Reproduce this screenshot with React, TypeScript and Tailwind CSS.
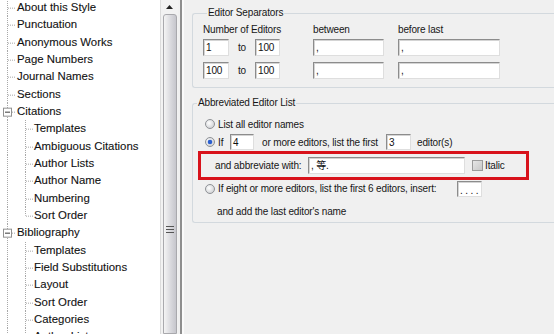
import React from "react";

type Item = { t: string; l: 0 | 1; exp?: boolean; last?: boolean };

const items: Item[] = [
  { t: "About this Style", l: 0 },
  { t: "Punctuation", l: 0 },
  { t: "Anonymous Works", l: 0 },
  { t: "Page Numbers", l: 0 },
  { t: "Journal Names", l: 0 },
  { t: "Sections", l: 0 },
  { t: "Citations", l: 0, exp: true },
  { t: "Templates", l: 1 },
  { t: "Ambiguous Citations", l: 1 },
  { t: "Author Lists", l: 1 },
  { t: "Author Name", l: 1 },
  { t: "Numbering", l: 1 },
  { t: "Sort Order", l: 1, last: true },
  { t: "Bibliography", l: 0, exp: true },
  { t: "Templates", l: 1 },
  { t: "Field Substitutions", l: 1 },
  { t: "Layout", l: 1 },
  { t: "Sort Order", l: 1 },
  { t: "Categories", l: 1 },
  { t: "Author Lists", l: 1 },
];

const H = 17.33;
const M = H / 2;

function TreeRow({ it }: { it: Item }) {
  const w = it.l === 0 ? 17 : 34;
  return (
    <div className="flex items-center h-[17.33px] whitespace-nowrap">
      <svg width={w} height={H} className="shrink-0">
        <line x1="7.5" y1="0" x2="7.5" y2={H} stroke="#a8a8a8" strokeDasharray="1 1" />
        {it.l === 0 && !it.exp && (
          <line x1="8" y1={M + 0.5} x2="16" y2={M + 0.5} stroke="#a8a8a8" strokeDasharray="1 1" />
        )}
        {it.l === 0 && it.exp && (
          <g>
            <rect x="3.5" y={M - 3.5} width="8" height="8" fill="#fff" stroke="#919191" />
            <line x1="5" y1={M + 0.5} x2="10" y2={M + 0.5} stroke="#3a3a3a" />
            <line x1="12" y1={M + 0.5} x2="16" y2={M + 0.5} stroke="#a8a8a8" strokeDasharray="1 1" />
          </g>
        )}
        {it.l === 1 && (
          <g>
            <line x1="25.5" y1="0" x2="25.5" y2={it.last ? M : H} stroke="#a8a8a8" strokeDasharray="1 1" />
            <line x1="26" y1={M + 0.5} x2="33" y2={M + 0.5} stroke="#a8a8a8" strokeDasharray="1 1" />
          </g>
        )}
      </svg>
      <span className="text-[11.4px] leading-none text-[#111] [-webkit-text-stroke:0.1px_#111]">{it.t}</span>
    </div>
  );
}

function Input({ w, v, h = 17, className = "" }: { w: number; v: string; h?: number; className?: string }) {
  return (
    <div
      className={
        "bg-white border border-[#8c8c8c] border-r-[#dedede] border-b-[#dedede] shadow-[inset_1px_1px_0_#d4d4d4] flex items-center pl-[2px] text-[10px] text-[#111] shrink-0 " +
        className
      }
      style={{ width: w, height: h }}
    >
      {v}
    </div>
  );
}

function Radio({ checked }: { checked?: boolean }) {
  return (
    <svg width="10" height="10" className="shrink-0">
      <defs>
        <radialGradient id="rg" cx="0.4" cy="0.4" r="0.7">
          <stop offset="0" stopColor="#ffffff" />
          <stop offset="1" stopColor="#c9cbce" />
        </radialGradient>
      </defs>
      <circle cx="5" cy="5" r="4.5" fill="url(#rg)" stroke="#8f9296" />
      {checked && <circle cx="5" cy="5" r="2.3" fill="#2b5fcf" />}
    </svg>
  );
}

export default function App() {
  return (
    <div
      className="w-[554px] h-[334px] flex overflow-hidden bg-[#f0f0f0]"
      style={{ fontFamily: '"Liberation Sans", Arial, "Noto Sans CJK SC", sans-serif' }}
    >
      {/* Tree */}
      <div className="w-[161px] h-full bg-white border-r border-[#dcdcdc] overflow-hidden">
        <div className="-mt-[1px]">
          {items.map((it, i) => (
            <TreeRow key={i} it={it} />
          ))}
        </div>
      </div>

      {/* Scrollbar */}
      <div className="w-[17px] h-full bg-[#f2f2f2] flex flex-col items-center">
        <div className="h-[14px] flex items-center justify-center">
          <svg width="7" height="4">
            <path d="M0 4 L3.5 0 L7 4 Z" fill="#222" />
          </svg>
        </div>
        <div className="flex-1 w-[14px] rounded-t-[3px] border border-[#a9a9ad] bg-gradient-to-r from-[#f4f4f4] via-[#dcdce0] to-[#c6c6cc] flex justify-center pt-[210px]">
          <svg width="8" height="9" className="shrink-0">
            <line x1="0" y1="1.5" x2="8" y2="1.5" stroke="#555" />
            <line x1="0" y1="4.5" x2="8" y2="4.5" stroke="#555" />
            <line x1="0" y1="7.5" x2="8" y2="7.5" stroke="#555" />
          </svg>
        </div>
      </div>

      {/* Splitter */}
      <div className="w-[6px] h-full flex">
        <div className="w-[2px] bg-[#f0f0f0]" />
        <div className="w-[2px] bg-[#8e8e8e]" />
        <div className="w-[2px] bg-[#fafafa]" />
      </div>

      {/* Right panel */}
      <div className="flex-1 h-full pl-[8px] pt-[7px] text-[10px] text-[#161616] tracking-[-0.15px] whitespace-nowrap">
        <fieldset className="border border-[#d3d9de] border-r-0 rounded-l-[3px] pl-[10px] pb-[8px] -mr-[4px]">
          <legend className="ml-[4px] px-[1px] leading-[12px]">Editor Separators</legend>
          <div className="flex pt-[5px]">
            <div className="w-[110px]">
              <div className="leading-[12px] h-[12px]">Number of Editors</div>
              <div className="flex items-center mt-[3px]">
                <Input w={26} v="1" />
                <span className="w-[26px] text-center">to</span>
                <Input w={25} v="100" />
              </div>
              <div className="flex items-center mt-[6px]">
                <Input w={26} v="100" />
                <span className="w-[26px] text-center">to</span>
                <Input w={25} v="100" />
              </div>
            </div>
            <div className="w-[85px]">
              <div className="leading-[12px] h-[12px]">between</div>
              <Input w={71} v="," className="mt-[3px] items-end" />
              <Input w={71} v="," className="mt-[6px] items-end" />
            </div>
            <div className="w-[102px]">
              <div className="leading-[12px] h-[12px]">before last</div>
              <Input w={102} v="," className="mt-[3px] items-end" />
              <Input w={102} v="," className="mt-[6px] items-end" />
            </div>
          </div>
        </fieldset>

        <fieldset className="mt-[9px] border border-[#d3d9de] border-r-0 rounded-l-[3px] pb-[2px] -mr-[4px]">
          <legend className="ml-[4px] px-[1px] leading-[12px]">Abbreviated Editor List</legend>
          <div className="pt-[6px]">
            <div className="flex items-center h-[18px] pl-[12px] gap-[3px]">
              <Radio />
              <span>List all editor names</span>
            </div>
            <div className="flex items-center h-[18px] pl-[12px]">
              <Radio checked />
              <span className="ml-[3px] w-[12px]">If</span>
              <Input w={24} v="4" h={16} />
              <span className="ml-[8px] w-[124px]">or more editors, list the first</span>
              <Input w={25} v="3" h={16} />
              <span className="ml-[6px]">editor(s)</span>
            </div>
            <div className="ml-[5px] w-[331px] h-[29px] border-[3px] border-[#d8121b] flex items-center pl-[14px]">
              <span className="w-[93px]">and abbreviate with:</span>
              <Input w={157} v=", 等." />
              <span className="ml-[7px] w-[11px] h-[11px] border border-[#9b9b9b] bg-gradient-to-br from-[#e6e6e6] to-[#c8c8c8]" />
              <span className="ml-[2px]">Italic</span>
            </div>
            <div className="flex items-center h-[17px] pl-[12px]">
              <Radio />
              <span className="ml-[3px] w-[239px]">If eight or more editors, list the first 6 editors, insert:</span>
              <Input w={25} v=". . . ." h={16} className="items-end text-[8px] leading-none" />
            </div>
            <div className="flex items-center h-[18px] pl-[24px] mt-[5px]">
              <span>and add the last editor's name</span>
            </div>
          </div>
        </fieldset>
      </div>
    </div>
  );
}
